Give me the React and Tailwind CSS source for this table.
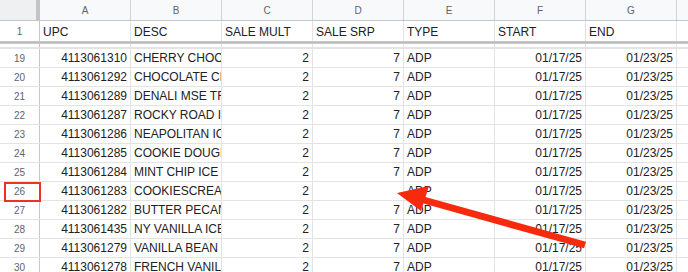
const columns = ["A", "B", "C", "D", "E", "F", "G"];

const rows = [
  [18, "4113061291", "PEANUT BUTTER", "2", "7", "ADP", "01/17/25", "01/23/25"],
  [19, "4113061310", "CHERRY CHOCOLATE", "2", "7", "ADP", "01/17/25", "01/23/25"],
  [20, "4113061292", "CHOCOLATE CHIP", "2", "7", "ADP", "01/17/25", "01/23/25"],
  [21, "4113061289", "DENALI MSE TRACKS", "2", "7", "ADP", "01/17/25", "01/23/25"],
  [22, "4113061287", "ROCKY ROAD ICE", "2", "7", "ADP", "01/17/25", "01/23/25"],
  [23, "4113061286", "NEAPOLITAN ICE", "2", "7", "ADP", "01/17/25", "01/23/25"],
  [24, "4113061285", "COOKIE DOUGH", "2", "7", "ADP", "01/17/25", "01/23/25"],
  [25, "4113061284", "MINT CHIP ICE CREAM", "2", "7", "ADP", "01/17/25", "01/23/25"],
  [26, "4113061283", "COOKIESCREAM", "2", "", "ADP", "01/17/25", "01/23/25"],
  [27, "4113061282", "BUTTER PECAN", "2", "7", "ADP", "01/17/25", "01/23/25"],
  [28, "4113061435", "NY VANILLA ICE", "2", "7", "ADP", "01/17/25", "01/23/25"],
  [29, "4113061279", "VANILLA BEAN ICE", "2", "7", "ADP", "01/17/25", "01/23/25"],
  [30, "4113061278", "FRENCH VANILLA", "2", "7", "ADP", "01/17/25", "01/23/25"],
];

// right-aligned columns: UPC, SALE MULT, SALE SRP, START, END
const alignRight = [true, false, true, true, false, true, true];

function DataRow({ row }) {
  const [num, ...cells] = row;
  return (
    <div className="flex h-[19px] border-b border-[#e2e3e3]">
      <div className="flex w-[40px] shrink-0 items-center justify-center border-r border-[#c7c7c7] text-[10px] text-[#5f6368]">
        {num}
      </div>
      {cells.map((cell, i) => (
        <div
          key={i}
          className={`flex w-[91px] shrink-0 items-center overflow-hidden whitespace-nowrap border-r border-[#e2e3e3] px-[3px] ${
            alignRight[i] ? "justify-end" : "justify-start"
          }`}
        >
          {cell}
        </div>
      ))}
      <div className="flex-1" />
    </div>
  );
}

export default function App() {
  const [hidden, ...visible] = rows;

  return (
    <div className="relative h-[272px] w-[688px] overflow-hidden bg-white font-['Liberation_Sans',Arial,sans-serif] text-[12px] text-[#202124]">
      {/* column letters */}
      <div className="flex h-[21px] border-b border-[#c7c7c7] bg-[#f8f9fa] text-[10px] text-[#5f6368]">
        <div className="w-[36px] shrink-0 bg-[#eef0f2]" />
        <div className="w-[4px] shrink-0 bg-[#c4c4c4]" />
        {columns.map((c) => (
          <div
            key={c}
            className="flex w-[91px] shrink-0 items-center justify-center border-r border-[#d4d4d4]"
          >
            {c}
          </div>
        ))}
        <div className="flex-1" />
      </div>

      {/* header row 1 */}
      <div className="flex h-[20px]">
        <div className="flex w-[40px] shrink-0 items-center justify-center border-r border-[#c7c7c7] text-[10px] text-[#5f6368]">
          1
        </div>
        {["UPC", "DESC", "SALE MULT", "SALE SRP", "TYPE", "START", "END"].map((h) => (
          <div
            key={h}
            className="flex w-[91px] shrink-0 items-center whitespace-nowrap border-r border-[#e2e3e3] px-[3px] pt-[2px]"
          >
            {h}
          </div>
        ))}
        <div className="flex-1" />
      </div>

      {/* freeze bar */}
      <div className="h-[3px] bg-gradient-to-b from-[#cfcfcf] via-[#b9b9b9] to-[#d6d6d6]" />

      {/* row 18, mostly under the freeze */}
      <div className="h-[5px] overflow-hidden border-b border-[#e2e3e3]">
        <div className="-mt-[15px]">
          <DataRow row={hidden} />
        </div>
      </div>

      {visible.map((row) => (
        <DataRow key={row[0]} row={row} />
      ))}

      {/* annotations */}
      <svg
        className="pointer-events-none absolute left-0 top-0"
        width="688"
        height="272"
        viewBox="0 0 688 272"
      >
        <rect x="5" y="183" width="35" height="18" fill="none" stroke="#ea3323" strokeWidth="2" />
        <line x1="585" y1="245" x2="420" y2="199" stroke="#f62b0e" strokeWidth="7" />
        <polygon points="397,193 429,186 421,211" fill="#f62b0e" />
      </svg>
    </div>
  );
}
